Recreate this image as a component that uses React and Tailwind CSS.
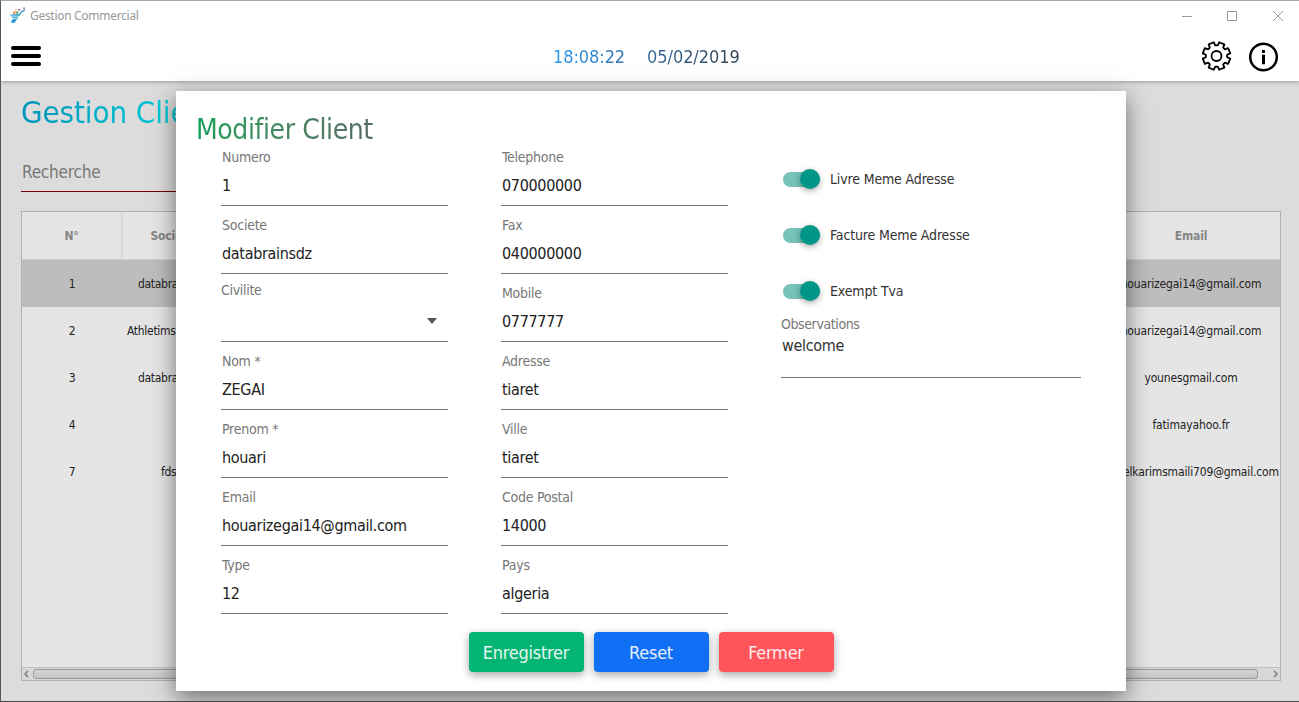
import React from "react";

const leftFields = [
  { label: "Numero", value: "1" },
  { label: "Societe", value: "databrainsdz" },
  { label: "Civilite", select: true },
  { label: "Nom *", value: "ZEGAI" },
  { label: "Prenom *", value: "houari" },
  { label: "Email", value: "houarizegai14@gmail.com" },
  { label: "Type", value: "12" },
];

const middleFields = [
  { label: "Telephone", value: "070000000" },
  { label: "Fax", value: "040000000" },
  { label: "Mobile", value: "0777777" },
  { label: "Adresse", value: "tiaret" },
  { label: "Ville", value: "tiaret" },
  { label: "Code Postal", value: "14000" },
  { label: "Pays", value: "algeria" },
];

const clients = [
  { id: "1", company: "databrainsdz", pad: "pl-4", email: "houarizegai14@gmail.com", selected: true },
  { id: "2", company: "Athletims", pad: "pl-[5px]", email: "houarizegai14@gmail.com" },
  { id: "3", company: "databrainsdz", pad: "pl-4", email: "younesgmail.com" },
  { id: "4", company: "", pad: "", email: "fatimayahoo.fr" },
  { id: "7", company: "fds", pad: "pl-[39px]", email: "abdelkarimsmaili709@gmail.com" },
];

function AppLogo() {
  return (
    <svg width="17" height="17" viewBox="0 0 17 17" className="ml-2 mr-1 shrink-0">
      <path d="M1 7.5L10 7L8.5 11L2.5 10Z" fill="#3ba3d0" />
      <path d="M3 10.5L9.5 10.3L7.5 13L3.8 12.5Z" fill="#2d9ccc" />
      <path d="M2 9L9.5 9.3M3 11.4L8.5 11.6" stroke="#fff" strokeWidth=".7" />
      <path d="M9.5 9L12.5 4.8L16 3" stroke="#4aa8cf" strokeWidth="1.5" fill="none" />
      <path d="M4.8 12.5L2.5 15.5M6.8 12.5L4.5 15.8" stroke="#2496ca" strokeWidth="1.8" />
      <path d="M4 4.5h2.5v2.2H4z" fill="#ee7b30" />
      <path d="M7 4.5h2.2v2.2H7z" fill="#59a65c" />
      <path d="M9.3 2h1.8v1.6H9.3zM14.3 .5h1.5v1.5h-1.5z" fill="#98498c" />
      <path d="M6 2.2h1.4v1.4H6z" fill="#e4b44a" />
    </svg>
  );
}

function gearPath() {
  const points = [];
  for (let i = 0; i < 8; i++) {
    const center = 22.5 + i * 45;
    [[-16, 10.7], [-11.5, 14], [11.5, 14], [16, 10.7]].forEach(([offset, r]) => {
      const a = ((center + offset) * Math.PI) / 180;
      points.push(`${(14.5 + r * Math.sin(a)).toFixed(2)} ${(15 - r * Math.cos(a)).toFixed(2)}`);
    });
  }
  return `M${points.join("L")}Z`;
}

function Gear() {
  return (
    <svg width="30" height="30" viewBox="0 0 30 30" fill="none" stroke="#000" strokeWidth="1.8" strokeLinejoin="round">
      <path d={gearPath()} />
      <circle cx="14.5" cy="15" r="5" />
    </svg>
  );
}

function Info() {
  return (
    <svg width="30" height="30" viewBox="0 0 30 30" fill="none" stroke="#000" className="mt-px">
      <circle cx="14.5" cy="15" r="13.3" strokeWidth="2.5" />
      <path d="M14.5 8v3M14.5 12.8v9.4" strokeWidth="3" />
    </svg>
  );
}

function Field({ label, value, select }) {
  return (
    <div className="flex h-[68px] flex-col border-b border-[#757575]">
      {select ? (
        <>
          <div className="mt-1.5 h-5 text-[14px] leading-5 tracking-[-0.3px] text-[#777]">{label}</div>
          <div className="mt-[11px] mr-[11px] flex h-5 items-center justify-end">
            <div className="border-x-[5.5px] border-t-[6px] border-x-transparent border-t-[#555]" />
          </div>
        </>
      ) : (
        <>
          <div className="mt-[9px] ml-px h-5 text-[14px] leading-5 tracking-[-0.25px] text-[#777]">{label}</div>
          <div className="mt-[9px] ml-px h-5 text-[16px] leading-5 tracking-[-0.32px] text-[#222]">{value}</div>
        </>
      )}
    </div>
  );
}

function Toggle({ label }) {
  return (
    <div className="flex h-14 items-center">
      <div className="ml-0.5 flex h-[15px] w-[37px] items-center justify-end rounded-full bg-[#77c2bb]">
        <div className="h-5 w-5 shrink-0 rounded-full bg-[#009688] shadow-[0_2px_6px_rgba(0,0,0,0.35)]" />
      </div>
      <span className="ml-2.5 text-[14px] tracking-[-0.15px] text-[#333]">{label}</span>
    </div>
  );
}

function ClientTable() {
  return (
    <div className="mr-[18px] ml-5 flex h-[470px] flex-col border border-[#b1b1b1] bg-[#e5e5e5] text-[12px] tracking-[-0.15px] text-[#222]">
      <div className="flex h-12 shrink-0 items-center border-b border-[#d0d0d0] font-bold text-[#858585]">
        <div className="flex h-full w-[101px] items-center justify-center border-r-2 border-[#dadada]">N°</div>
        <div className="w-[99px] text-center">Societe</div>
        <div className="grow" />
        <div className="w-[178px] text-center">Email</div>
      </div>
      {clients.map((c) => (
        <div key={c.id} className={c.selected ? "flex h-[47px] shrink-0 items-center bg-[#bdbdbd]" : "flex h-[47px] shrink-0 items-center"}>
          <div className="w-[100px] text-center">{c.id}</div>
          <div className={`w-[100px] tracking-[-0.3px] ${c.pad}`}>{c.company}</div>
          <div className="grow" />
          <div className="flex w-[178px] justify-center whitespace-nowrap">{c.email}</div>
        </div>
      ))}
      <div className="mt-auto flex h-[13px] items-center border-t border-[#c0c0c0] bg-[#d8d8d8]">
        <svg width="11" height="10" viewBox="0 0 11 10" fill="none" stroke="#777" strokeWidth="1.4"><path d="M6 2L3 5L6 8" /></svg>
        <div className="h-2.5 w-[1225px] rounded-[3px] border border-[#999] bg-linear-to-b from-[#d6d6d6] to-[#c4c4c4]" />
        <svg width="11" height="10" viewBox="0 0 11 10" fill="none" stroke="#777" strokeWidth="1.4" className="ml-auto"><path d="M5 2L8 5L5 8" /></svg>
      </div>
    </div>
  );
}

function EditDialog() {
  return (
    <div className="absolute top-[90px] left-[175px] flex h-[600px] w-[950px] flex-col bg-white shadow-[0_7px_22px_rgba(0,0,0,0.5)]">
      <div className="flex h-[47px] shrink-0 items-start pt-[25px] pl-5">
        <h2 className="bg-linear-to-r from-[#0aa158] to-[#566b63] bg-clip-text text-[28px] leading-[28px] tracking-[-0.4px] text-transparent">Modifier Client</h2>
      </div>
      <div className="ml-[45px] flex items-start">
        <div className="w-[227px]">
          {leftFields.map((f) => <Field key={f.label} {...f} />)}
        </div>
        <div className="ml-[53px] w-[227px]">
          {middleFields.map((f) => <Field key={f.label} {...f} />)}
        </div>
        <div className="ml-[53px] w-[300px] pt-[13px]">
          <Toggle label="Livre Meme Adresse" />
          <Toggle label="Facture Meme Adresse" />
          <Toggle label="Exempt Tva" />
          <div className="flex h-[59px] flex-col border-b border-[#757575]">
            <div className="-mt-[5px] h-5 text-[14px] leading-5 tracking-[-0.4px] text-[#777]">Observations</div>
            <div className="mt-0.5 ml-px h-5 text-[16px] leading-5 tracking-[-0.3px] text-[#333]">welcome</div>
          </div>
        </div>
      </div>
      <div className="mt-[18px] flex justify-center gap-2.5 text-[18px] tracking-[-0.25px] text-white/90">
        <button className="h-10 w-[115px] rounded bg-[#04b473] shadow-[0_3px_8px_rgba(0,0,0,0.35)]">Enregistrer</button>
        <button className="h-10 w-[115px] rounded bg-[#116ff6] shadow-[0_3px_8px_rgba(0,0,0,0.35)]">Reset</button>
        <button className="h-10 w-[115px] rounded bg-[#ff5459] shadow-[0_3px_8px_rgba(0,0,0,0.35)]">Fermer</button>
      </div>
    </div>
  );
}

export default function App() {
  return (
    <div className="relative flex h-[702px] w-[1299px] flex-col overflow-hidden border-t border-b border-l border-t-[#aaa5a5] border-b-[#4b484b] border-l-[#555] bg-[#dcdcdc] font-['DejaVu_Sans_Condensed','DejaVu_Sans',sans-serif] [font-stretch:75%]">
      <header className="h-20 shrink-0 bg-white shadow-[0_1px_4px_rgba(0,0,0,0.3)]">
        <div className="flex h-[29px] items-center">
          <AppLogo />
          <span className="font-['Noto_Sans',sans-serif] text-[12px] tracking-[-0.3px] text-[#999]">Gestion Commercial</span>
          <svg width="106" height="12" viewBox="0 0 106 12" className="mr-[13px] ml-auto" fill="none" stroke="#999">
            <path d="M2 6.5h10M47.5 1.5h9v9h-9zM93 1l10 10M103 1l-10 10" />
          </svg>
        </div>
        <div className="flex h-[51px] items-center">
          <div className="ml-2.5 flex w-[30px] flex-col gap-1">
            <div className="h-1 rounded-full bg-black" />
            <div className="h-1 rounded-full bg-black" />
            <div className="h-1 rounded-full bg-black" />
          </div>
          <div className="mt-0.5 ml-[512px] flex gap-[22px] bg-linear-to-r from-[#1e96f5] to-[#33424f] bg-clip-text text-[18px] tracking-[-0.08px] text-transparent">
            <span>18:08:22</span>
            <span>05/02/2019</span>
          </div>
          <div className="mt-0.5 mr-5 ml-auto flex gap-[17px]">
            <Gear />
            <Info />
          </div>
        </div>
      </header>
      <main className="flex flex-col">
        <div className="flex h-[60px] items-center pt-0.5 pl-5">
          <h1 className="bg-linear-to-r from-[#0095b8] to-[#00dfe2] bg-clip-text text-[31px] tracking-[-0.1px] whitespace-nowrap text-transparent">Gestion Clients</h1>
        </div>
        <div className="mb-[19px] ml-5 flex h-[51px] w-[400px] items-center border-b border-[#750007] pt-3.5 pl-px text-[17px] tracking-[-0.2px] text-[#777]">Recherche</div>
        <ClientTable />
      </main>
      <EditDialog />
    </div>
  );
}
